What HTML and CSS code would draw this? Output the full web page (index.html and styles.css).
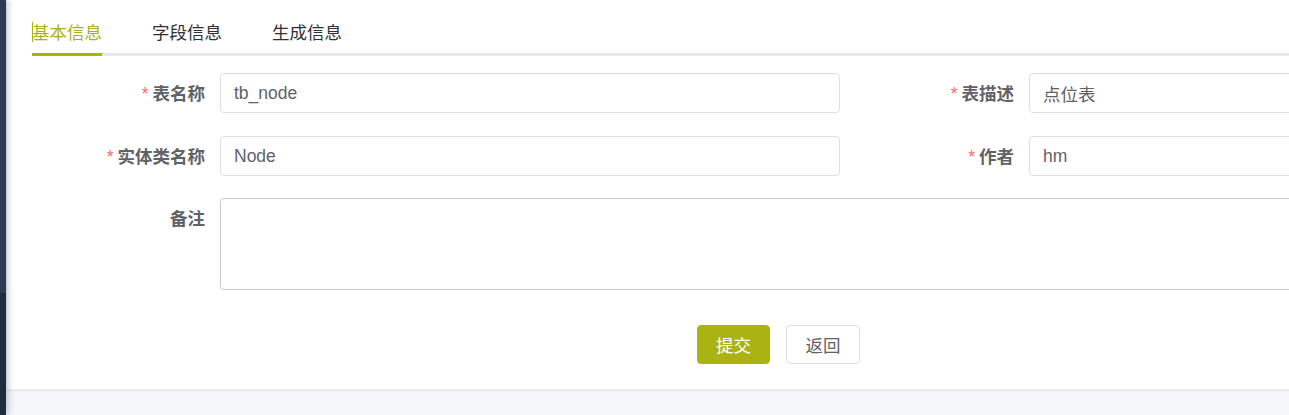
FILE: index.html
```html
<!DOCTYPE html>
<html lang="zh">
<head>
<meta charset="utf-8">
<title>生成配置</title>
<link rel="stylesheet" href="styles.css">
</head>
<body>
<div class="layout">
  <aside class="sidebar"><div class="sb-top"></div><div class="sb-bottom"></div></aside>
  <main class="main">
    <section class="card">
      <nav class="tabs">
        <div class="tab active"><span class="caret"></span>基本信息</div>
        <div class="tab">字段信息</div>
        <div class="tab">生成信息</div>
      </nav>
      <form class="form">
        <label class="label"><span class="req">*</span>表名称</label>
        <div class="field"><input class="input" value="tb_node"></div>
        <label class="label"><span class="req">*</span>表描述</label>
        <div class="field"><input class="input" value="点位表"></div>

        <label class="label"><span class="req">*</span>实体类名称</label>
        <div class="field"><input class="input" value="Node"></div>
        <label class="label"><span class="req">*</span>作者</label>
        <div class="field"><input class="input" value="hm"></div>

        <label class="label label-top">备注</label>
        <div class="field field-wide"><textarea class="textarea"></textarea></div>
      </form>
      <div class="actions">
        <button class="btn btn-primary" type="button">提交</button>
        <button class="btn" type="button">返回</button>
      </div>
    </section>
  </main>
</div>
</body>
</html>
```
FILE: styles.css
```css
* { box-sizing: border-box; }
html, body {
  margin: 0;
  height: 415px;
  overflow: hidden;
  background: #f4f6fa;
  font-family: "Liberation Sans", "Noto Sans CJK SC", sans-serif;
}
.layout {
  display: flex;
  height: 415px;
  width: 1700px;
}
.sidebar {
  width: 6px;
  flex: none;
  display: flex;
  flex-direction: column;
  position: relative;
  z-index: 2;
  box-shadow: 2px 0 6px rgba(0, 21, 41, 0.25);
}
.sb-top { height: 293px; background: #2c3b50; }
.sb-bottom { flex: 1; background: #1f2d3d; }
.main {
  flex: none;
  width: 1544px;
  padding-left: 1px;
}
.card {
  background: #fff;
  height: 389px;
  padding: 10px 0 0 25px;
  box-shadow: 0 1px 4px rgba(0, 0, 0, 0.08);
}
.tabs {
  display: flex;
  gap: 50px;
  border-bottom: 3px solid #e4e7ed;
  height: 46px;
}
.tab {
  height: 46px;
  line-height: 43px;
  font-size: 17.5px;
  color: #303133;
  font-family: "Noto Sans CJK SC", sans-serif;
  display: flex;
  align-items: flex-start;
}
.tab.active {
  color: #a9b214;
  border-bottom: 3px solid #a9b214;
  height: 46px;
}
.caret {
  display: inline-block;
  flex: none;
  width: 1px;
  height: 20px;
  margin-top: 12px;
  background: #a9b214;
  margin-right: -1px;
}
.form {
  display: grid;
  grid-template-columns: 188px 620px 189px 620px;
  row-gap: 23px;
  margin-top: 17px;
}
.label {
  font-family: "Noto Sans CJK SC", sans-serif;
  font-weight: bold;
  font-size: 17.5px;
  color: #606266;
  text-align: right;
  padding-right: 15px;
  line-height: 40px;
  height: 40px;
}
.req {
  color: #f56c6c;
  font-weight: normal;
  font-family: "Liberation Sans", sans-serif;
  margin-right: 4px;
}
.label-top { align-self: start; margin-top: -1px; }
.field-wide { grid-column: 2 / 5; margin-top: -1px; }
.input {
  width: 100%;
  height: 40px;
  border: 1px solid #dcdfe6;
  border-radius: 4px;
  padding: 0 13px;
  font-size: 17.5px;
  color: #606266;
  font-family: "Liberation Sans", "Noto Sans CJK SC", sans-serif;
  outline: none;
  background: #fff;
}
.textarea {
  display: block;
  width: 100%;
  height: 92px;
  border: 1px solid #c5c8d0;
  border-radius: 4px;
  resize: none;
  outline: none;
}
.actions {
  display: flex;
  justify-content: center;
  gap: 16px;
  margin-top: 35px;
  padding-right: 25px;
}
.btn {
  height: 39px;
  width: 74px;
  border: 1px solid #dcdfe6;
  border-radius: 4px;
  background: #fff;
  color: #606266;
  font-size: 17.5px;
  font-family: "Noto Sans CJK SC", sans-serif;
  padding: 0;
}
.btn-primary {
  width: 73px;
  background: #abb312;
  border-color: #abb312;
  color: #fff;
}
```
